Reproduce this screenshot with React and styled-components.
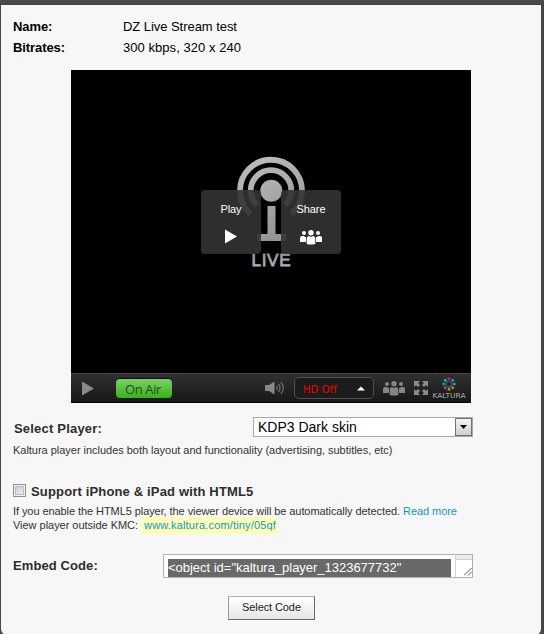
import React from 'react';
import styled, { createGlobalStyle } from 'styled-components';

const Global = createGlobalStyle`
  * { box-sizing: border-box; }
  body { margin: 0; background: #474847; font-family: "Liberation Sans", Arial, sans-serif; }
`;

const Backdrop = styled.div`
  height: 634px;
  padding: 5px 3px 0 1px;
  overflow: hidden;
  background: linear-gradient(#4a4b4a 0 3px, #3d3e3d 5px, #454645 6px);
`;
const Panel = styled.main`
  width: 540px;
  height: 630px;
  padding: 12px 0 0 12px;
  background: #f7f7f7;
  border-radius: 0 0 6px 6px;
`;
const Row = styled.div`
  display: flex;
  height: 21px;
  line-height: 20px;
  font-size: 13px;
  color: #000;
`;
const Term = styled.b`
  width: 110px;
  letter-spacing: -.08px;
`;
const Value = styled.span`
  letter-spacing: ${p => p.$track || 0}px;
`;

const Player = styled.section`
  width: 400px;
  height: 333px;
  margin: 11px 0 0 58px;
  display: flex;
  flex-direction: column;
  background: #000;
`;
const Stage = styled.div`
  position: relative;
  height: 303px;
`;
const LiveArt = styled.svg`
  display: block;
`;
const Overlay = styled.div`
  position: absolute;
  left: 130px;
  top: 120px;
  display: flex;
  gap: 20px;
`;
const OverlayButton = styled.div`
  width: 60px;
  height: 64px;
  padding-top: 12px;
  display: flex;
  flex-direction: column;
  align-items: center;
  border-radius: 4px;
  background: rgba(51, 51, 51, .9);
  color: #fff;
  font-size: 11px;
  line-height: 14px;
  letter-spacing: -.1px;
  svg { display: block; margin-top: 12px; }
`;
const Controls = styled.div`
  height: 30px;
  display: flex;
  align-items: center;
  padding-left: 11px;
  border-top: 1px solid #484848;
  border-bottom: 1px solid #050505;
  background: linear-gradient(#303030, #171717);
  svg { display: block; flex: none; }
`;
const OnAir = styled.div`
  width: 56px;
  height: 19px;
  margin: 1px 0 0 22px;
  padding-right: 2px;
  border-radius: 4px;
  background: linear-gradient(#7ad267, #39b118);
  box-shadow: 0 -1px 0 #080808;
  color: #294a24;
  font: 13px/20px "Open Sans", sans-serif;
  letter-spacing: -.4px;
  text-align: center;
`;
const Quality = styled.div`
  width: 80px;
  height: 22px;
  margin: 0 9px 0 8px;
  padding: 2px 8px 0 8px;
  display: flex;
  justify-content: space-between;
  border: 1px solid #505050;
  border-radius: 5px;
  background: #1c1c1c;
  color: #f00000;
  font: 10px/19px "DejaVu Sans", sans-serif;
  letter-spacing: .1px;
  svg { margin-top: 6px; }
`;
const Speaker = styled.svg`
  margin-left: 93px;
`;
const FullScreen = styled.svg`
  margin-left: 9px;
`;
const Brand = styled.svg`
  margin-left: -6px;
`;

const Field = styled.div`
  width: 460px;
  display: flex;
  justify-content: space-between;
  margin-top: ${p => p.$top}px;
`;
const Label = styled.div`
  padding-top: ${p => p.$drop || 0}px;
  padding-left: ${p => p.$indent || 0}px;
  color: #2d2d2d;
  font-size: 13px;
  font-weight: bold;
  line-height: 20px;
  letter-spacing: ${p => p.$track || 0}px;
`;
const Select = styled.div`
  width: 220px;
  height: 20px;
  padding-left: 4px;
  display: flex;
  justify-content: space-between;
  border: 1px solid #a7a8ab;
  background: #fff;
  color: #000;
  font-size: 14px;
  line-height: 19px;
`;
const DropButton = styled.span`
  width: 17px;
  height: 18px;
  display: grid;
  place-items: center;
  border: 1px solid #707070;
  background: linear-gradient(#f4f4f4, #d0d0d0);
`;
const Note = styled.p`
  height: 14px;
  margin: ${p => p.$top || 0}px 0 0;
  color: #333;
  font-size: 11px;
  line-height: 14px;
  white-space: nowrap;
  letter-spacing: ${p => p.$track || 0}px;
`;
const Link = styled.a`
  color: #0d98c6;
`;
const Marked = styled(Link)`
  padding: 2px 1px 3px 3px;
  background: #ffffb5;
  letter-spacing: .17px;
`;
const CheckRow = styled.div`
  display: flex;
  align-items: center;
  gap: 5px;
  height: 20px;
  margin-top: 25px;
`;
const Checkbox = styled.span`
  width: 13px;
  height: 13px;
  margin-bottom: 4px;
  border: 1px solid #8e8f8f;
  background: linear-gradient(135deg, #c5c9cc, #f5f5f5);
  box-shadow: inset 0 0 0 1px #f4f4f4, inset 0 0 0 2px #b8bcc0;
`;
const CodeBox = styled.div`
  width: 310px;
  height: 24px;
  padding: 4px 0 0 4px;
  display: flex;
  justify-content: space-between;
  border: 1px solid #aeb0b2;
  background: #fff;
`;
const Code = styled.span`
  width: 283px;
  height: 18px;
  background: #696969;
  color: #fff;
  font-size: 13px;
  line-height: 17px;
  letter-spacing: -.02px;
  white-space: nowrap;
`;
const Grip = styled.span`
  width: 17px;
  height: 22px;
  margin-top: -4px;
  border-left: 1px solid #d5d5d5;
  background: linear-gradient(#ececec 0 4px, #cfcfcf 4px 5px, #fff 5px);
  svg { display: block; margin: 13px 0 0 8px; }
`;
const SelectCode = styled.button`
  display: block;
  width: 87px;
  height: 24px;
  margin: 18px 0 0 215px;
  padding: 0 0 2px;
  border: 1px solid #707070;
  border-color: #b0b0b0 #666 #666 #999;
  background: linear-gradient(#fff, #e6e6e6);
  color: #222;
  font: 11px "Liberation Sans", sans-serif;
  letter-spacing: -.1px;
`;

const People = ({ color }) => (
  <svg width="22" height="15" viewBox="0 0 22 15" fill={color}>
    <circle cx="4" cy="3" r="2" />
    <circle cx="18" cy="3" r="2" />
    <circle cx="11" cy="2.7" r="2.7" />
    <path d="M0 12V8Q0 6 2 6H4L5 7H6V12ZM16 12V7H17L18 6H20Q22 6 22 8V12Z" />
    <path d="M6.7 14V8.5Q6.7 6 9 6L11 7L13 6Q15.3 6 15.3 8.5V14Q11 15 6.7 14Z" />
  </svg>
);

const PETALS = ['#ef174f', '#278eea', '#16a9d5', '#f26522', '#63ba42', '#e82a8b', '#00a9c9', '#19b798'];

export default function App() {
  return (
    <>
      <Global />
      <Backdrop>
        <Panel>
          <Row><Term>Name:</Term><Value $track={-0.05}>DZ Live Stream test</Value></Row>
          <Row><Term>Bitrates:</Term><Value $track={0.05}>300 kbps, 320 x 240</Value></Row>
          <Player>
            <Stage>
              <LiveArt width="400" height="303">
                <defs>
                  <linearGradient id="metal" gradientUnits="userSpaceOnUse" x1="170" y1="87" x2="220" y2="180">
                    <stop stopColor="#c0c0c0" /><stop offset="1" stopColor="#8c8c8c" />
                  </linearGradient>
                  <linearGradient id="lettering" x1="0" y1="0" x2="0" y2="1">
                    <stop stopColor="#8f8f8f" /><stop offset="1" stopColor="#b8b8b8" />
                  </linearGradient>
                </defs>
                <g fill="none" stroke="url(#metal)" strokeWidth="5.8">
                  <path d="M179.5 144A31 31 0 1 1 220.5 144" />
                  <path d="M185.8 135A20.3 20.3 0 1 1 214.2 135" />
                </g>
                <g fill="url(#metal)">
                  <circle cx="200.3" cy="120.7" r="11" />
                  <path d="M196.5 136H204.5V164H215V171H186V164H196.5Z" />
                </g>
                <text x="180.5" y="195.5" fontSize="17" textLength="39" fill="url(#lettering)" stroke="url(#lettering)" strokeWidth=".8">LIVE</text>
              </LiveArt>
              <Overlay>
                <OverlayButton>Play<svg width="12" height="16" fill="#fff"><path d="M0 1.5V15.5L12 8.5Z" /></svg></OverlayButton>
                <OverlayButton>Share<svg width="22" height="18"><g transform="translate(0 2)"><People color="#fff" /></g></svg></OverlayButton>
              </Overlay>
            </Stage>
            <Controls>
              <svg width="12" height="15" fill="#898989"><path d="M0 .5V14.5L12 7.5Z" /></svg>
              <OnAir>On Air</OnAir>
              <Speaker width="21" height="15" viewBox="0 0 21 15" fill="#888">
                <path d="M0 4H4L9.5 .5V13.5L4 10H0Z" />
                <path d="M11.5 5Q13 7 11.5 9M13.5 3Q16.5 7 13.5 11M16 1Q20.5 7 16 13" fill="none" stroke="#6c6c6c" strokeWidth="1.3" />
              </Speaker>
              <Quality>HD Off<svg width="8" height="5" fill="#fff"><path d="M0 4.5L4 .5L8 4.5Z" /></svg></Quality>
              <People color="#858585" />
              <FullScreen width="14" height="14" viewBox="0 0 14 14" fill="#8b8b8b">
                <path d="M0 0H6L4.2 2L6 4L4 6L2 4.2L0 6ZM14 0V6L12 4.2L10 6L8 4L9.8 2L8 0ZM0 14V8L2 9.8L4 8L6 10L4.2 12L6 14ZM14 14H8L9.8 12L8 10L10 8L12 9.8L14 8Z" />
              </FullScreen>
              <Brand width="48" height="27" viewBox="0 0 48 27">
                <g transform="translate(27 9)">
                  {PETALS.map((c, i) => (
                    <g key={c} transform={`rotate(${i * 45})`} fill={c}>
                      <rect x="-1.3" y="-6.5" width="2.6" height="2.4" />
                      <rect x="-.6" y="-3.6" width="1.2" height="1.4" />
                    </g>
                  ))}
                </g>
                <text x="10.5" y="22.5" fill="#b0b0b0" fontFamily="DejaVu Sans" fontSize="7" textLength="33" lengthAdjust="spacingAndGlyphs">KALTURA</text>
              </Brand>
            </Controls>
          </Player>
          <Field $top={14}>
            <Label $drop={2} $indent={1} $track={0.2}>Select Player:</Label>
            <Select>KDP3 Dark skin<DropButton><svg width="7" height="4"><path d="M0 0H7L3.5 4Z" /></svg></DropButton></Select>
          </Field>
          <Note $top={4} $track={-0.025}>Kaltura player includes both layout and functionality (advertising, subtitles, etc)</Note>
          <CheckRow><Checkbox /><Label $track={0.16}>Support iPhone &amp; iPad with HTML5</Label></CheckRow>
          <Note $top={2} $track={-0.075}>If you enable the HTML5 player, the viewer device will be automatically detected. <Link>Read more</Link></Note>
          <Note $track={-0.03}>View player outside KMC: <Marked>www.kaltura.com/tiny/05qf</Marked></Note>
          <Field $top={22}>
            <Label $drop={2} $track={0.1}>Embed Code:</Label>
            <CodeBox>
              <Code>&lt;object id="kaltura_player_1323677732"</Code>
              <Grip><svg width="8" height="8" stroke="#555"><path d="M0 7.5L7.5 0M4 7.5L7.5 4" /></svg></Grip>
            </CodeBox>
          </Field>
          <SelectCode>Select Code</SelectCode>
        </Panel>
      </Backdrop>
    </>
  );
}
